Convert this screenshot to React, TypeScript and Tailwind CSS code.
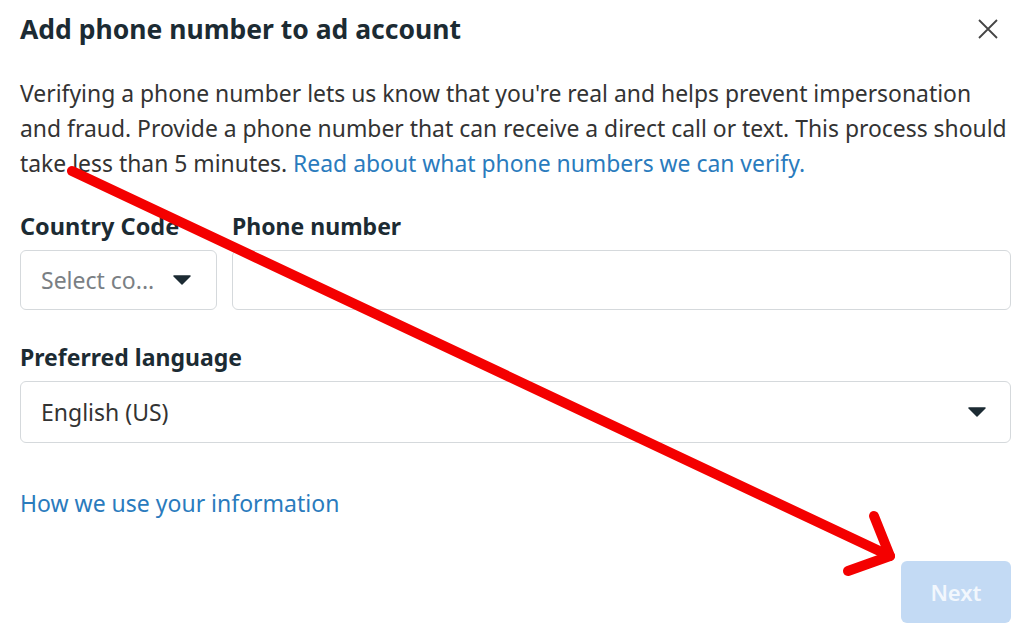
import React from 'react'

const font = { fontFamily: '"Noto Sans", "Open Sans", Arial, sans-serif' }

function Caret() {
  return (
    <svg width="18" height="10" viewBox="0 0 18 10" className="shrink-0">
      <path d="M1 1h16l-8 8z" fill="#1c2b33" stroke="#1c2b33" strokeWidth="1.5" strokeLinejoin="round" />
    </svg>
  )
}

export default function App() {
  return (
    <div className="relative h-[638px] w-[1024px] overflow-hidden bg-white text-[#1c2b33]" style={font}>
      <div className="flex h-full flex-col pl-[20px] pr-[13px] pt-[12px]">
        {/* header */}
        <div className="flex items-center justify-between">
          <h1 className="text-[26.5px] font-bold leading-[34px]">Add phone number to ad account</h1>
          <button className="mr-[12px] text-[#3a3a3a]">
            <svg width="22" height="22" viewBox="0 0 22 22">
              <path d="M2 2l18 18M20 2L2 20" stroke="#444" strokeWidth="1.8" />
            </svg>
          </button>
        </div>

        <p className="mt-[30px] w-[1000px] whitespace-nowrap text-[22.9px] leading-[35px] text-[#333]">
          Verifying a phone number lets us know that you're real and helps prevent impersonation
          <br />
          and fraud. Provide a phone number that can receive a direct call or text. This process should
          <br />
          take less than 5 minutes. <a className="text-[#2a7bbd]">Read about what phone numbers we can verify.</a>
        </p>

        {/* country + phone */}
        <div className="mt-[30px] flex gap-[15px]">
          <div className="flex w-[197px] flex-col">
            <label className="whitespace-nowrap text-[23.5px] font-bold leading-[30px]">Country Code</label>
            <div className="mt-[9px] flex h-[60px] items-center justify-between rounded-[6px] border border-[#d5d9dc] pl-[20px] pr-[25px]">
              <span className="text-[23px] text-[#7a7f84]">Select co...</span>
              <Caret />
            </div>
          </div>
          <div className="flex flex-1 flex-col">
            <label className="text-[23px] font-bold leading-[30px]">Phone number</label>
            <div className="mt-[9px] h-[60px] rounded-[6px] border border-[#d5d9dc]" />
          </div>
        </div>

        <label className="mt-[32px] text-[23px] font-bold leading-[30px]">Preferred language</label>
        <div className="mt-[9px] flex h-[62px] items-center justify-between rounded-[6px] border border-[#d5d9dc] pl-[20px] pr-[24px]">
          <span className="text-[23px] text-[#333]">English (US)</span>
          <Caret />
        </div>

        <a className="mt-[45px] text-[23px] leading-[30px] text-[#2a7bbd]">How we use your information</a>

        <div className="mt-auto mb-[15px] flex justify-end">
          <button className="h-[62px] w-[110px] rounded-[6px] bg-[#c3daf4] text-[22px] font-semibold text-[#f2f7fd]">Next</button>
        </div>
      </div>

      {/* red annotation arrow */}
      <svg className="pointer-events-none absolute left-0 top-0" width="1024" height="638" viewBox="0 0 1024 638">
        <g stroke="#f40000" strokeWidth="10" strokeLinecap="round" strokeLinejoin="round" fill="none">
          <path d="M72 171L890 556" />
          <path d="M874 516L890 556L848 571" />
        </g>
      </svg>
    </div>
  )
}
